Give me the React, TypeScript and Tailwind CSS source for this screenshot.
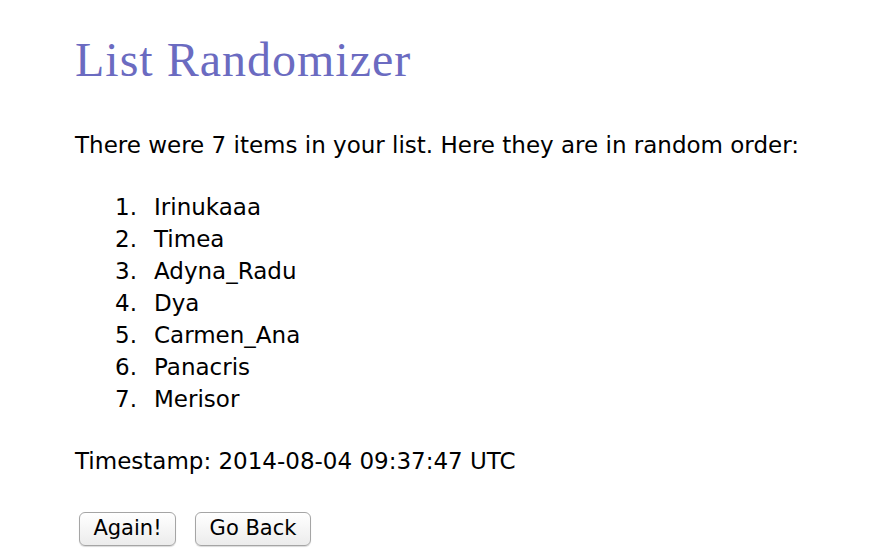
const items = ["Irinukaaa", "Timea", "Adyna_Radu", "Dya", "Carmen_Ana", "Panacris", "Merisor"];

export default function App() {
  return (
    <div className="min-h-[556px] w-full bg-white pl-[75px] pt-[30px] text-black [font-family:'DejaVu_Sans',sans-serif]">
      <h1 className="text-[48px] leading-[60px] tracking-[1px] text-[#6b6bc1] [font-family:'Liberation_Serif',serif]">
        List Randomizer
      </h1>

      <p className="mt-[39px] text-[23px] leading-[32px]">
        There were 7 items in your list. Here they are in random order:
      </p>

      <ol className="mt-[30px] text-[23px] leading-[32px]">
        {items.map((name, i) => (
          <li key={name} className="flex">
            <span className="w-[62px] text-right">{i + 1}.</span>
            <span className="pl-[17px]">{name}</span>
          </li>
        ))}
      </ol>

      <p className="mt-[30px] text-[23px] leading-[32px]">Timestamp: 2014-08-04 09:37:47 UTC</p>

      <div className="ml-[4px] mt-[35px] flex gap-[19px]">
        <button className="h-[34px] w-[97px] rounded-[6px] border border-[#a5a5a5] bg-gradient-to-b from-white to-[#ececec] text-[21px] shadow-[0_1px_1px_rgba(0,0,0,0.15)]">
          Again!
        </button>
        <button className="h-[34px] w-[116px] rounded-[6px] border border-[#a5a5a5] bg-gradient-to-b from-white to-[#ececec] text-[21px] shadow-[0_1px_1px_rgba(0,0,0,0.15)]">
          Go Back
        </button>
      </div>
    </div>
  );
}
